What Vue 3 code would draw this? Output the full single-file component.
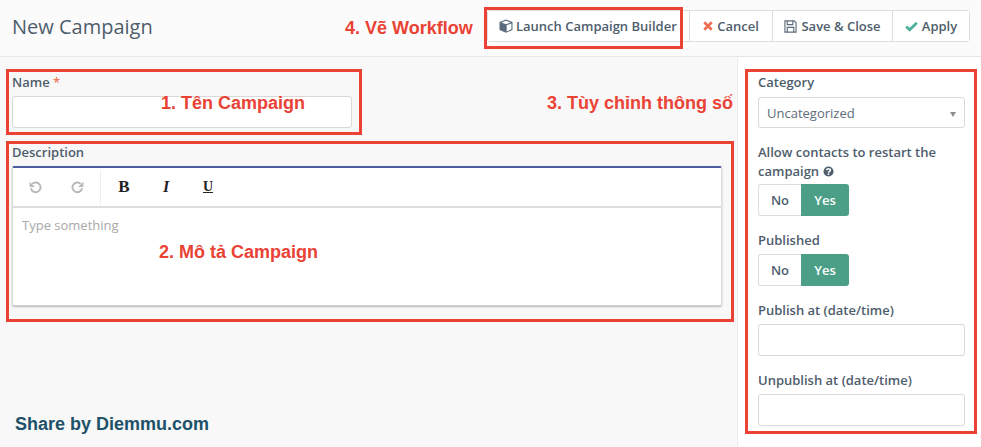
<script setup>
const annotations = [
  { text: '4. Vẽ Workflow', cls: 'n4' },
  { text: '1. Tên Campaign', cls: 'n1' },
  { text: '3. Tùy chỉnh thông số', cls: 'n3' },
  { text: '2. Mô tả Campaign', cls: 'n2' }
]
const boxes = ['b1', 'b2', 'b3', 'b4']
</script>

<template>
  <div class="page">
    <header class="top">
      <h1 class="title">New Campaign</h1>
      <div class="btns">
        <button class="btn launch">
          <svg class="ic" viewBox="0 0 14 14" width="14" height="14"><path fill="#5d6c7c" d="M7 .5 13.5 3v8L7 13.8.5 11V3z"/><path fill="#fff" d="M7 1.7 11.6 3.4 7 5.2 2.4 3.4zM7.7 6.3l4.7-1.8v5.8L7.7 12.4z"/></svg>
          Launch Campaign Builder
        </button>
        <button class="btn cancel">
          <svg class="ic" viewBox="0 0 12 12" width="10" height="10"><path stroke="#ee6e55" stroke-width="3.2" d="M1.5 1.5 10.5 10.5M10.5 1.5 1.5 10.5"/></svg>
          Cancel
        </button>
        <button class="btn save">
          <svg class="ic" viewBox="0 0 14 14" width="13" height="13"><path fill="none" stroke="#5d6c7c" stroke-width="1.2" d="M1 1h10l2 2v10H1z"/><path fill="none" stroke="#5d6c7c" stroke-width="1.2" d="M3.5 1v4h6V1M3.5 13V8h7v5"/></svg>
          Save &amp; Close
        </button>
        <button class="btn apply">
          <svg class="ic" viewBox="0 0 14 12" width="13" height="11"><path fill="none" stroke="#4fb09a" stroke-width="3" d="M1.2 6 5 9.6 12.8 2"/></svg>
          Apply
        </button>
      </div>
    </header>

    <div class="main">
      <section class="content">
        <div class="field name-field">
          <label class="lbl">Name <span class="req">*</span></label>
          <div class="input"></div>
        </div>
        <div class="field">
          <label class="lbl">Description</label>
          <div class="editor">
            <div class="toolbar">
              <div class="tgroup history">
                <svg viewBox="0 0 16 16" width="13" height="13"><path fill="none" stroke="#b9b9b9" stroke-width="2.4" d="M4 3.5A6 6 0 1 1 2.3 9"/><path fill="#b9b9b9" d="M.8 1v6.4h6.4z"/></svg>
                <svg viewBox="0 0 16 16" width="13" height="13"><path fill="none" stroke="#b9b9b9" stroke-width="2.4" d="M12 3.5A6 6 0 1 0 13.7 9"/><path fill="#b9b9b9" d="M15.2 1v6.4H8.8z"/></svg>
              </div>
              <div class="tgroup fmt">
                <span class="f b">B</span>
                <span class="f i">I</span>
                <span class="f u">U</span>
              </div>
            </div>
            <div class="editbody">Type something</div>
          </div>
        </div>
        <div class="share">Share by Diemmu.com</div>
      </section>

      <aside class="side">
        <div class="sfield first">
          <label class="lbl">Category</label>
          <div class="input select">Uncategorized<i class="caret"></i></div>
        </div>
        <div class="sfield allow">
          <label class="lbl">Allow contacts to restart the campaign
            <svg class="help" viewBox="0 0 12 12" width="11" height="11"><circle cx="6" cy="6" r="5.5" fill="#4e5d6c"/><path fill="none" stroke="#fff" stroke-width="1.6" d="M3.9 4.6C4 3.4 4.9 2.9 6 2.9c1.200 0 2.100.6 2.100 1.600 0 1.400-2.100 1.400-2.100 2.800"/><rect x="5.100" y="8.100" width="1.800" height="1.600" fill="#fff"/></svg>
          </label>
          <div class="toggle"><span class="no">No</span><span class="yes">Yes</span></div>
        </div>
        <div class="sfield">
          <label class="lbl">Published</label>
          <div class="toggle"><span class="no">No</span><span class="yes">Yes</span></div>
        </div>
        <div class="sfield">
          <label class="lbl">Publish at (date/time)</label>
          <div class="input"></div>
        </div>
        <div class="sfield">
          <label class="lbl">Unpublish at (date/time)</label>
          <div class="input"></div>
        </div>
      </aside>
    </div>

    <div v-for="b in boxes" :key="b" class="redbox" :class="b"></div>
    <div v-for="a in annotations" :key="a.cls" class="note" :class="a.cls">{{ a.text }}</div>
  </div>
</template>

<style>
html, body { margin: 0; background: #f8f8f8; }
</style>

<style scoped>
.page {
  position: relative;
  width: 981px;
  height: 447px;
  overflow: hidden;
  font-family: "Open Sans", sans-serif;
  color: #4e5d6c;
  background: #f8f8f8;
}
.top {
  display: flex;
  align-items: center;
  justify-content: space-between;
  box-sizing: border-box;
  height: 57px;
  padding: 0 11px 4px 12px;
  background: #fbfbfb;
  border-bottom: 1px solid #e6e6e6;
}
.title {
  margin: 0;
  padding-top: 2px;
  font-size: 20px;
  font-weight: 400;
  line-height: 28px;
  color: #4e5d6c;
}
.btns {
  display: flex;
  height: 32px;
  box-sizing: border-box;
  border: 1px solid #ddd;
  border-radius: 3px;
  background: #fff;
}
.btn {
  display: flex;
  align-items: center;
  justify-content: center;
  gap: 4px;
  box-sizing: border-box;
  height: 100%;
  padding: 0;
  border: 0;
  border-right: 1px solid #ddd;
  background: #fff;
  font: 600 13px "Open Sans", sans-serif;
  color: #4e5d6c;
}
.launch { width: 202px; justify-content: flex-start; padding-left: 11px; gap: 3px; }
.cancel { width: 83px; }
.save { width: 120px; }
.apply { width: 76px; border-right: 0; }
.main {
  display: flex;
  height: 390px;
}
.content {
  position: relative;
  width: 737px;
  box-sizing: border-box;
  padding: 16px 15px 0 12px;
}
.lbl {
  display: block;
  font-size: 13px;
  font-weight: 600;
  line-height: 19px;
  color: #4e5d6c;
}
.req { color: #f0795e; }
.field { margin-bottom: 15px; }
.name-field { width: 340px; }
.name-field .lbl { margin-bottom: 4px; }
.input {
  box-sizing: border-box;
  height: 32px;
  border: 1px solid #d9d9d9;
  border-radius: 3px;
  background: #fff;
}
.editor {
  margin-top: 4px;
  width: 710px;
  height: 140px;
  box-sizing: border-box;
  background: #fff;
  border-top: 2px solid #4e5d9d;
  border-left: 1px solid #ddd;
  border-right: 1px solid #ddd;
  border-bottom: 1px solid #ccc;
  border-radius: 2px;
  box-shadow: 0 1px 2px rgba(0, 0, 0, .25);
}
.toolbar {
  display: flex;
  align-items: center;
  height: 40px;
  box-sizing: border-box;
  border-bottom: 2px solid #ddd;
}
.tgroup {
  display: flex;
  align-items: center;
  height: 34px;
}
.history {
  width: 88px;
  box-sizing: border-box;
  padding-left: 16px;
  gap: 29px;
  border-right: 1px solid #eee;
}
.fmt { gap: 30px; padding-left: 17px; }
.f {
  font-family: "Liberation Serif", serif;
  font-size: 16px;
  color: #222;
  width: 12px;
  text-align: center;
}
.b { font-weight: 700; font-size: 17px; }
.i { font-style: italic; font-weight: 700; }
.u { text-decoration: underline; font-weight: 700; font-size: 14px; }
.editbody {
  padding: 8px 9px;
  font-size: 13px;
  line-height: 18px;
  color: #a8a8a8;
}
.share {
  position: absolute;
  left: 15px;
  top: 357px;
  font: 700 18px "Liberation Sans", sans-serif;
  color: #1d5069;
}
.side {
  flex: 1;
  box-sizing: border-box;
  padding: 16px 16px 0 20px;
  background: #fff;
  border-left: 1px solid #ededed;
}
.sfield { margin-top: 15px; }
.sfield.first { margin-top: 0; }
.sfield .lbl { margin-bottom: 4px; }
.sfield.first .lbl { margin-bottom: 5px; }
.sfield.allow .lbl { margin-bottom: 3px; }
.select {
  position: relative;
  padding: 0 8px;
  height: 31px;
  line-height: 31px;
  font-size: 13px;
  color: #5d6c7c;
}
.caret {
  position: absolute;
  right: 8px;
  top: 14px;
  border-left: 3.5px solid transparent;
  border-right: 3.5px solid transparent;
  border-top: 5px solid #8a8f95;
}
.help { vertical-align: -1px; }
.toggle {
  display: flex;
  width: 91px;
  height: 32px;
  font-size: 13px;
  font-weight: 600;
  line-height: 32px;
  text-align: center;
}
.no {
  width: 43px;
  box-sizing: border-box;
  line-height: 30px;
  border: 1px solid #ddd;
  border-right: 0;
  border-radius: 3px 0 0 3px;
  background: #fff;
  color: #4e5d6c;
}
.yes {
  width: 48px;
  border-radius: 0 3px 3px 0;
  background: #4b9f87;
  color: #fff;
}
.redbox {
  position: absolute;
  box-sizing: border-box;
  border: 3px solid #ea4235;
  pointer-events: none;
}
.b1 { left: 6px; top: 69px; width: 356px; height: 66px; }
.b2 { left: 6px; top: 141px; width: 728px; height: 181px; }
.b3 { left: 745px; top: 69px; width: 232px; height: 365px; }
.b4 { left: 484px; top: 7px; width: 199px; height: 42px; }
.note {
  position: absolute;
  font: 700 18px/22px "Liberation Sans", sans-serif;
  color: #ea4235;
  white-space: nowrap;
}
.n1 { left: 161px; top: 92px; }
.n2 { left: 159px; top: 241px; }
.n3 { left: 547px; top: 92px; }
.n4 { left: 345px; top: 17px; }
</style>
